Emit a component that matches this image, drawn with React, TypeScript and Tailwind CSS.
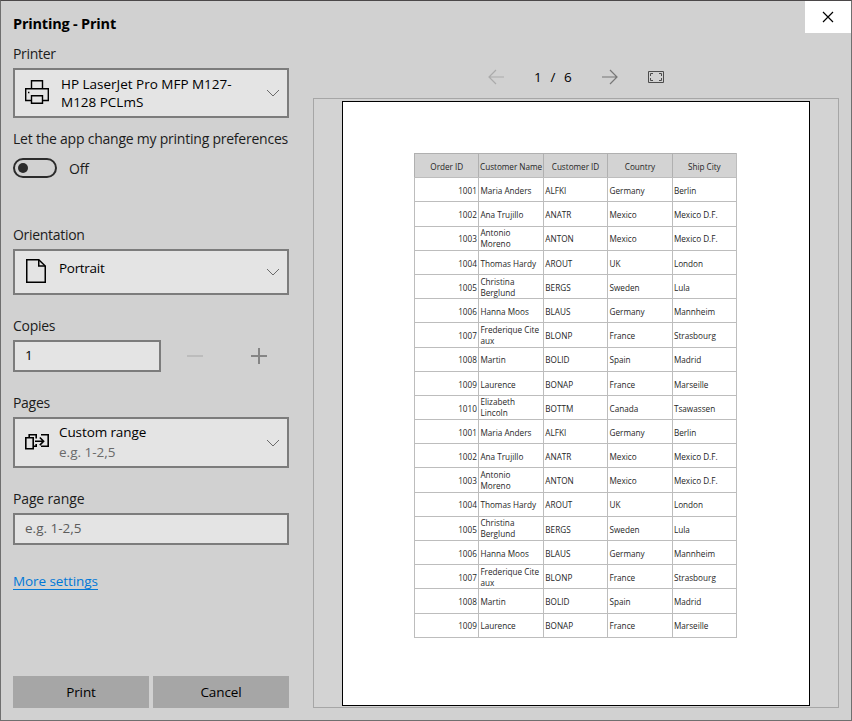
import React from "react";

const orders: [string, string, string, string, string][] = [
  ["1001", "Maria Anders", "ALFKI", "Germany", "Berlin"],
  ["1002", "Ana Trujillo", "ANATR", "Mexico", "Mexico D.F."],
  ["1003", "Antonio\nMoreno", "ANTON", "Mexico", "Mexico D.F."],
  ["1004", "Thomas Hardy", "AROUT", "UK", "London"],
  ["1005", "Christina\nBerglund", "BERGS", "Sweden", "Lula"],
  ["1006", "Hanna Moos", "BLAUS", "Germany", "Mannheim"],
  ["1007", "Frederique Cite\naux", "BLONP", "France", "Strasbourg"],
  ["1008", "Martin", "BOLID", "Spain", "Madrid"],
  ["1009", "Laurence", "BONAP", "France", "Marseille"],
  ["1010", "Elizabeth\nLincoln", "BOTTM", "Canada", "Tsawassen"],
];
const rows = [...orders, ...orders.slice(0, 9)];
const headers = ["Order ID", "Customer Name", "Customer ID", "Country", "Ship City"];

function Chevron() {
  return (
    <svg className="h-[8px] w-[14px] shrink-0" viewBox="0 0 14 8" fill="none" stroke="#6a6a6a">
      <path d="M1 1l6 6 6-6" />
    </svg>
  );
}

function PrinterIcon() {
  return (
    <svg className="h-[26px] w-[26px] shrink-0" viewBox="0 0 26 26" fill="none" stroke="#000" strokeWidth="1.4">
      <path d="M7.500 8.500V.7h11v7.800M7.500 20.500H1.700V8.700h22.600v11.800H18.500" />
      <path d="M7.500 15.700h11v7.600h-11z" />
      <path d="M4 12.500h1.400" />
    </svg>
  );
}

function PageIcon() {
  return (
    <svg className="h-[26px] w-[22px] shrink-0" viewBox="0 0 22 26" fill="none" stroke="#000" strokeWidth="1.5">
      <path d="M1.750.75h12l6.500 6.250v16.250H1.750z" />
      <path d="M13.750.75V7h6.500" />
    </svg>
  );
}

function RangeIcon() {
  return (
    <svg className="mb-px h-[18px] w-[26px] shrink-0" viewBox="0 0 26 18" fill="none" stroke="#000" strokeWidth="1.6">
      <path d="M1.800 4.800h7.400v11H1.800z" />
      <path d="M5.200 4.500V1.800h7v3.700M9.500 13.200h2.700V11" />
      <path d="M17 1.800h7.200v11.400H17M11 8.300h8.500M15.800 4.500l3.800 3.800-3.800 3.800" />
    </svg>
  );
}

export default function App() {
  return (
    <div className="flex h-[721px] w-[852px] overflow-hidden border border-[#6f6f6f] border-t-[#4b4849] bg-[#d1d1d1] font-['Open_Sans','Noto_Sans',sans-serif] text-[13.5px] leading-[18px] text-black">
      <aside className="flex w-[288px] shrink-0 flex-col pl-3">
        <h1 className="mt-[14px] text-[14.5px] font-bold tracking-[-0.2px]">Printing - Print</h1>
        <div className="mt-3 text-[14px] tracking-[-0.3px] text-[#1c1c1c]">Printer</div>
        <div className="mt-[5px] flex h-[50px] items-center border-2 border-[#7c7c7c] bg-[#e4e4e4] pr-[7px] pl-[9px]">
          <PrinterIcon />
          <div className="ml-[11px] flex-1 tracking-[-0.01px]">
            HP LaserJet Pro MFP M127-
            <br />
            M128 PCLmS
          </div>
          <Chevron />
        </div>
        <div className="mt-3 text-[14px] whitespace-nowrap tracking-[-0.23px] text-[#1c1c1c]">Let the app change my printing preferences</div>
        <div className="mt-[10px] flex h-5 items-center">
          <div className="flex h-5 w-[44px] items-center rounded-full border-2 border-[#2c2c2c] pl-[3px]">
            <span className="h-[10px] w-[10px] rounded-full bg-[#2c2c2c]" />
          </div>
          <span className="mt-px ml-3 text-[14px] tracking-[-0.2px] text-[#1c1c1c]">Off</span>
        </div>
        <div className="mt-[48px] text-[14px] tracking-[-0.3px] text-[#1c1c1c]">Orientation</div>
        <div className="mt-[5px] flex h-[46px] items-center border-2 border-[#7c7c7c] bg-[#e4e4e4] pr-[7px] pl-[10px]">
          <PageIcon />
          <span className="mb-[8px] ml-[12px] flex-1 tracking-[-0.3px]">Portrait</span>
          <Chevron />
        </div>
        <div className="mt-[22px] text-[14px] tracking-[-0.3px] text-[#1c1c1c]">Copies</div>
        <div className="mt-[5px] flex h-8 items-center">
          <div className="flex h-8 w-[148px] items-center border-2 border-[#7c7c7c] bg-[#e4e4e4] pb-[2px] pl-[10px]">1</div>
          <span className="ml-[26px] h-[2px] w-4 bg-[#bcbcbc]" />
          <svg className="ml-[48px] h-4 w-4" viewBox="0 0 16 16" fill="none" stroke="#858585" strokeWidth="2">
            <path d="M0 8h16M8 0v16" />
          </svg>
        </div>
        <div className="mt-[22px] text-[14px] tracking-[-0.3px] text-[#1c1c1c]">Pages</div>
        <div className="mt-[5px] flex h-[51px] items-center border-2 border-[#7c7c7c] bg-[#e4e4e4] pr-[7px] pl-[9px]">
          <RangeIcon />
          <div className="mb-px ml-[9px] flex-1">
            <div className="leading-[18px] tracking-[-0.1px]">Custom range</div>
            <div className="mt-px leading-5 text-[#6a6a6a]">e.g. 1-2,5</div>
          </div>
          <Chevron />
        </div>
        <div className="mt-[22px] text-[14px] tracking-[-0.15px] text-[#1c1c1c]">Page range</div>
        <div className="mt-[5px] flex h-8 items-center border-2 border-[#7c7c7c] bg-[#e4e4e4] pb-[2px] pl-[10px] text-[#5c5c5c]">e.g. 1-2,5</div>
        <div className="mt-[27px] h-[18px] self-start border-b border-[#0078d7] leading-[18px] tracking-[-0.08px] text-[#0078d7]">More settings</div>
        <div className="mt-auto mb-3 grid h-8 grid-cols-2 gap-1">
          <button className="bg-[#a6a6a6] tracking-[-0.1px]">Print</button>
          <button className="bg-[#a6a6a6] tracking-[-0.1px]">Cancel</button>
        </div>
      </aside>

      <main className="ml-6 flex flex-1 flex-col">
        <div className="flex h-8 justify-end">
          <button className="flex h-8 w-[46px] items-center justify-center bg-white">
            <svg className="h-[12px] w-[12px]" viewBox="0 0 12 12" fill="none" stroke="#000" strokeWidth="1.2">
              <path d="M1 1l10 10M11 1L1 11" />
            </svg>
          </button>
        </div>
        <div className="mt-8 flex h-6 items-center pl-[175px]">
          <svg className="h-4 w-4" viewBox="0 0 16 16" fill="none" stroke="#ababab" strokeWidth="1.2">
            <path d="M16 8H1M8 1L1 8l7 7" />
          </svg>
          <span className="ml-[30px] w-[39px] whitespace-pre tracking-[0.55px]">1  /  6</span>
          <svg className="ml-[29px] h-4 w-4" viewBox="0 0 16 16" fill="none" stroke="#777" strokeWidth="1.2">
            <path d="M0 8h15M8 1l7 7-7 7" />
          </svg>
          <svg className="ml-[30px] h-3 w-4" viewBox="0 0 16 12" fill="none" stroke="#4c4c4c">
            <path d="M.5.5h15v11H.5zM2.500 5V2.500H5M11 2.500h2.500V5M13.500 7v2.500H11M5 9.500H2.500V7" />
          </svg>
        </div>
        <div className="mt-[9px] mr-3 h-[610px] border border-[#a6a6a6] bg-[#d3d3d3] pt-[2px] pl-7">
          <div className="h-[605px] w-[468px] border border-black bg-white pt-[51px] pl-[71px]">
            <div className="h-[485px] w-[323px] border-r border-b border-[#bdbdbd] text-[8.2px] leading-[11px] text-[#262626]">
              <div className="grid h-[24.2px] grid-cols-5 bg-[#d3d3d3]">
                {headers.map((h) => (
                  <div key={h} className="flex items-center justify-center border-t border-l border-[#b0b0b0] pt-[2px] tracking-[-0.03px] whitespace-nowrap">
                    {h}
                  </div>
                ))}
              </div>
              {rows.map((r, i) => (
                <div key={i} className="grid h-[24.2px] grid-cols-5">
                  {r.map((c, j) => (
                    <div
                      key={j}
                      className={
                        "flex items-center border-t border-l border-[#bdbdbd] whitespace-pre " +
                        (j === 1 ? "pt-0 pl-px " : "pt-[1.5px] ") +
                        (j === 1 && !c.includes("\n") ? "pb-0 leading-[13px]" : "") +
                        (j === 0 ? "justify-end pr-[1.5px]" : j === 2 ? "pl-[1.5px]" : j > 2 ? "pl-[1.3px]" : "")
                      }
                    >
                      <span className={j === 1 && !c.includes("\n") ? "pt-[1.5px]" : ""}>{c}</span>
                    </div>
                  ))}
                </div>
              ))}
            </div>
          </div>
        </div>
      </main>
    </div>
  );
}
